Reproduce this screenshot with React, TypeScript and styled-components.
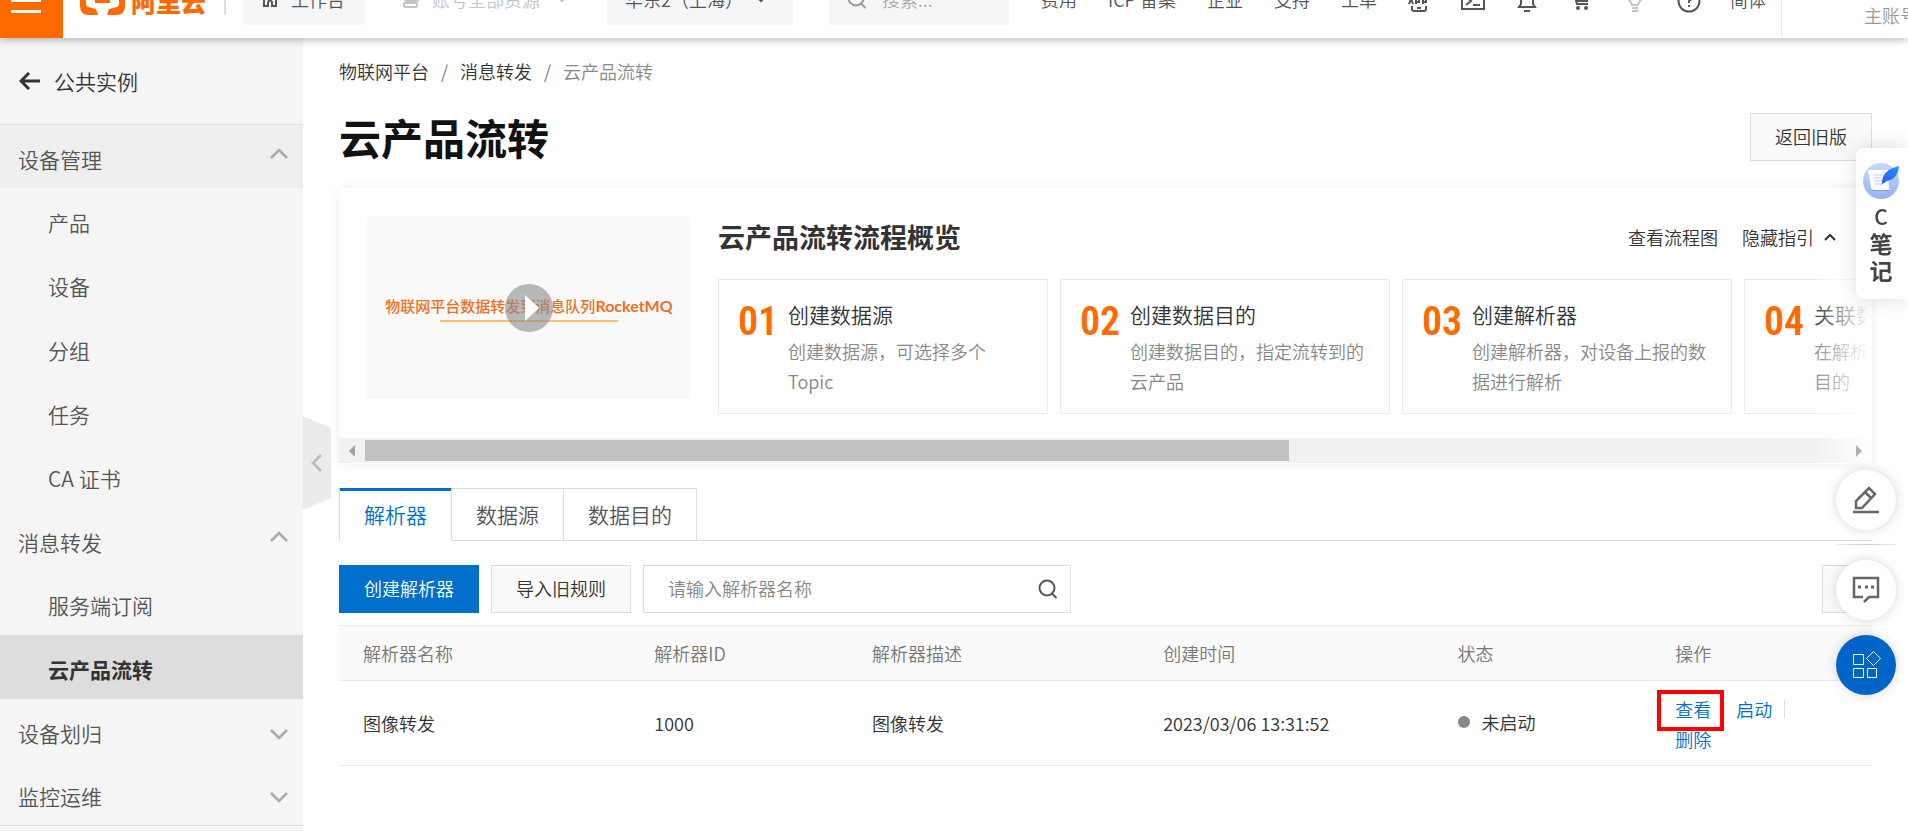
import React from 'react';
import styled, { createGlobalStyle, css } from 'styled-components';

const GlobalStyle = createGlobalStyle`
  *, *::before, *::after { box-sizing: border-box; }
  html, body { margin: 0; padding: 0; }
  body {
    background: #fff;
    color: #333;
    font-family: 'Noto Sans CJK SC', sans-serif;
    font-size: 18px;
    font-weight: 350;
    line-height: 30px;
    overflow-x: hidden;
  }
  button, input { font: inherit; color: inherit; margin: 0; }
  a { color: inherit; text-decoration: none; }
  ul, ol, h1, h2, h3, p { margin: 0; padding: 0; list-style: none; }
`;

/* ---------- top bar ---------- */

const Header = styled.header`
  position: relative;
  z-index: 5;
  height: 38px;
  display: flex;
  flex-direction: column;
  justify-content: flex-end;
  clip-path: inset(0 0 -20px 0);
  background: #fff;
  box-shadow: 0 2px 8px rgba(0, 0, 0, 0.28);
`;

const Bar = styled.div`
  flex: none;
  height: 75px;
  display: flex;
  align-items: center;
  color: #555;
  white-space: nowrap;
`;

const MenuButton = styled.button`
  width: 63px;
  height: 75px;
  padding: 0 22px 0 11px;
  border: 0;
  background: #ff6a00;
  display: flex;
  flex-direction: column;
  justify-content: center;
  gap: 8px;
  span { height: 3px; background: #fff; }
`;

const Logo = styled.a`
  display: flex;
  align-items: center;
  gap: 6px;
  margin-left: 17px;
  padding-right: 18px;
  border-right: 2px solid #ddd;
  height: 28px;
  color: #ff6a00;
  font-size: 25px;
  font-weight: 900;
`;

const Pill = styled.button<{ $plain?: boolean; $width: number; $left: number }>`
  width: ${p => p.$width}px;
  margin-left: ${p => p.$left}px;
  height: 49px;
  padding: 0 18px 4px;
  border: 0;
  border-radius: 4px;
  background: ${p => (p.$plain ? 'transparent' : '#f5f6f8')};
  color: ${p => (p.$plain ? '#c1c5cc' : '#555')};
  display: flex;
  align-items: center;
  gap: 12px;
  svg:last-child:not(:first-child) { margin-left: auto; }
`;

const TopSearch = styled.label`
  width: 180px;
  height: 49px;
  margin-left: 36px;
  padding: 0 16px 4px 18px;
  background: #f5f6f8;
  display: flex;
  align-items: center;
  gap: 15px;
  color: #999;
  svg { flex: none; }
  input {
    width: 100%;
    min-width: 0;
    border: 0;
    padding: 0;
    background: none;
    outline: none;
  }
  input::placeholder { color: #aaa; opacity: 1; }
`;

const TopLinks = styled.nav`
  display: flex;
  align-items: center;
  gap: 31px;
  margin-left: 32px;
  padding-bottom: 4px;
`;

const IconLinks = styled.div`
  display: flex;
  align-items: center;
  gap: 28px;
  margin-left: 29px;
  a { display: flex; width: 26px; justify-content: center; }
  a:last-child { width: auto; padding-bottom: 4px; }
`;

const Muted = styled.a`
  color: #c1c5cc;
`;

const Account = styled.div`
  align-self: stretch;
  flex: 1;
  min-width: 0;
  margin-left: 15px;
  padding: 37px 0 0 82px;
  border-left: 1px solid #e8e8e8;
  overflow: hidden;
  color: #999;
`;

/* ---------- side navigation ---------- */

const Body = styled.div`
  display: flex;
  min-height: calc(100vh - 38px);
`;

const Sidebar = styled.aside`
  position: relative;
  flex: none;
  width: 303px;
  background: #f5f5f5;
  color: #555;
  font-size: 21px;
`;

const Back = styled.a`
  display: flex;
  align-items: center;
  gap: 13px;
  height: 87px;
  padding-left: 19px;
  border-bottom: 1px solid #ddd;
  color: #333;
`;

const Group = styled.button<{ $hot?: boolean }>`
  width: 100%;
  height: 63px;
  padding: 4px 15px 0 18px;
  border: 0;
  background: ${p => (p.$hot ? '#efefef' : 'transparent')};
  display: flex;
  align-items: center;
  justify-content: space-between;
`;

const Arrow = styled.svg<{ $open?: boolean }>`
  margin: ${p => (p.$open ? '0 0 10px' : '4px 0 0')};
`;

const Item = styled.a<{ $active?: boolean }>`
  display: flex;
  align-items: center;
  height: 64px;
  padding: 4px 0 0 48px;
  ${p =>
    p.$active &&
    css`
      background: #ddd;
      color: #333;
      font-weight: 700;
    `}
`;

const NavEnd = styled.div`
  border-top: 1px solid #ddd;
`;

const Collapse = styled.button`
  position: absolute;
  z-index: 2;
  left: 303px;
  top: 378px;
  width: 28px;
  height: 94px;
  padding: 0;
  border: 0;
  background: #ebebeb;
  clip-path: polygon(0 0, 100% 12px, 100% 82px, 0 100%);
  display: grid;
  place-items: center;
`;

/* ---------- content ---------- */

const Main = styled.main`
  flex: 1;
  min-width: 0;
  padding: 18px 36px 0;
`;

const Crumbs = styled.nav`
  display: flex;
  span { width: 31px; text-align: center; color: #777; }
  a:last-child { color: #888; }
`;

const TitleRow = styled.div`
  display: flex;
  align-items: center;
  justify-content: space-between;
  height: 48px;
  margin-top: 27px;
`;

const Title = styled.h1`
  font-size: 42px;
  line-height: 48px;
  font-weight: 700;
  color: #111;
`;

const Button = styled.button<{ $primary?: boolean }>`
  height: 48px;
  padding: 0 24px 2px;
  border: 1px solid ${p => (p.$primary ? '#0070cc' : '#ddd')};
  background: ${p => (p.$primary ? '#0070cc' : '#fafafa')};
  color: ${p => (p.$primary ? '#fff' : '#333')};
`;

const Guide = styled.section`
  position: relative;
  margin-top: 27px;
  padding-top: 28px;
  height: 276px;
  background: #fff;
  box-shadow: 0 0 9px rgba(0, 0, 0, 0.07);
  overflow: hidden;
  display: flex;
  flex-direction: column;
  justify-content: space-between;
`;

const GuideBody = styled.div`
  display: flex;
  gap: 27px;
  padding-left: 28px;
`;

const Video = styled.div`
  position: relative;
  flex: none;
  width: 324px;
  height: 183px;
  border-radius: 3px;
  background: #f9f9f9;
  display: flex;
  flex-direction: column;
  align-items: center;
  justify-content: center;
  color: #ee7020;
  font-size: 15px;
  line-height: 24px;
  font-weight: 500;
  white-space: nowrap;
  p { padding-bottom: 2px; }
  b { font-family: Lato, sans-serif; font-size: 16px; font-weight: 700; }
  i { width: 178px; height: 2px; background: #f8c268; }
`;

const Play = styled.button`
  position: absolute;
  top: 68px;
  left: 138px;
  width: 48px;
  height: 48px;
  padding: 0 0 0 5px;
  border: 0;
  border-radius: 50%;
  background: rgba(140, 140, 140, 0.6);
  display: grid;
  place-items: center;
`;

const Steps = styled.div`
  flex: 1;
  min-width: 0;
`;

const StepsHead = styled.div`
  display: flex;
  align-items: center;
  gap: 24px;
  height: 42px;
  padding: 0 36px 0 0;
  h2 {
    flex: 1;
    font-size: 27px;
    line-height: 42px;
    font-weight: 700;
  }
  a { display: flex; align-items: center; gap: 10px; }
`;

const Cards = styled.ol`
  display: flex;
  gap: 12px;
  margin-top: 21px;
  overflow: hidden;
`;

const Card = styled.li`
  flex: none;
  width: 330px;
  height: 135px;
  padding: 18px 24px 0 19px;
  border: 1px solid #ebebeb;
  display: grid;
  grid-template-columns: 50px 1fr;
`;

const Num = styled.span`
  color: #ff6a00;
  font-family: 'Roboto Condensed', 'Liberation Sans Narrow', 'Liberation Sans', sans-serif;
  font-size: 40px;
  font-weight: 600;
  line-height: 48px;
`;

const CardText = styled.div`
  h3 { font-size: 21px; font-weight: 350; line-height: 33px; margin-bottom: 5px; }
  p { color: #888; }
`;

const Scrollbar = styled.div`
  display: flex;
  align-items: center;
  height: 25px;
  margin-bottom: 1px;
  padding: 0 10px;
  background: #f1f1f1;
  svg { position: relative; z-index: 1; }
`;

const Track = styled.div`
  flex: 1;
  margin: 0 10px;
`;

const Thumb = styled.div`
  width: 62.4%;
  height: 21px;
  background: #c1c1c1;
`;

const Fade = styled.div`
  position: absolute;
  inset: 90px 0 1px auto;
  width: 60px;
  background: linear-gradient(to right, rgba(255, 255, 255, 0), #fff 95%);
  pointer-events: none;
`;

const Tabs = styled.div`
  display: flex;
  margin-top: 24px;
  border-bottom: 1px solid #ddd;
`;

const Tab = styled.button<{ $active?: boolean }>`
  height: 53px;
  margin-bottom: -1px;
  padding: 0 24px 2px;
  border: solid #ddd;
  border-width: 1px 1px 1px 0;
  background: #fff;
  color: #555;
  font-size: 21px;
  ${p =>
    p.$active &&
    css`
      border-left-width: 1px;
      border-bottom-color: #fff;
      border-top-color: #0070cc;
      box-shadow: inset 0 2px #0070cc;
      color: #0070cc;
    `}
`;

const Toolbar = styled.div`
  display: flex;
  gap: 12px;
  margin: 24px 0 12px;
`;

const SearchBox = styled.label`
  width: 428px;
  height: 48px;
  padding: 0 12px 0 24px;
  border: 1px solid #ddd;
  display: flex;
  align-items: center;
  input {
    flex: 1;
    min-width: 0;
    padding: 0 0 2px;
    border: 0;
    outline: none;
    background: none;
  }
  input::placeholder { color: #888; opacity: 1; }
`;

const Refresh = styled.button`
  width: 50px;
  height: 48px;
  margin-left: auto;
  border: 1px solid #ddd;
  background: #fafafa;
`;

const Table = styled.table`
  width: 100%;
  border-collapse: collapse;
  table-layout: fixed;
  th, td { text-align: left; border-bottom: 1px solid #ebebeb; }
  thead tr { background: #fafafa; border-top: 1px solid #ebebeb; }
  th { padding: 12px 0 12px 24px; font-weight: 350; color: #777; }
  td { padding: 11px 0 11px 24px; }
`;

const Status = styled.span`
  display: flex;
  align-items: center;
  gap: 12px;
  padding-bottom: 3px;
  &::before {
    content: '';
    width: 12px;
    height: 12px;
    border-radius: 50%;
    background: #888;
  }
`;

const Actions = styled.div`
  display: flex;
  flex-wrap: wrap;
  width: 130px;
  padding-top: 2px;
  color: #0070cc;
  a { display: flex; align-items: center; }
  a:not(:last-child)::after {
    content: '';
    width: 1px;
    height: 18px;
    margin: 0 12px;
    background: #ddd;
  }
`;

const Marked = styled.span`
  position: relative;
  &::after {
    content: '';
    position: absolute;
    inset: -4px -13px -7px -18px;
    border: 4px solid #f00;
  }
`;

/* ---------- floating tools ---------- */

const Notes = styled.button`
  position: fixed;
  z-index: 6;
  right: 0;
  top: 148px;
  width: 52px;
  height: 151px;
  padding: 14px 2px 0 0;
  border: 0;
  border-radius: 8px 0 0 8px;
  background: #fff;
  box-shadow: 0 0 20px rgba(0, 0, 0, 0.14);
  color: #444;
  font-size: 23px;
  font-weight: 700;
  line-height: 27px;
  display: flex;
  flex-direction: column;
  align-items: center;
  b { font-weight: 500; font-size: 21px; margin-top: 3px; }
`;

const Tools = styled.div`
  position: fixed;
  z-index: 6;
  right: 12px;
  top: 470px;
  display: flex;
  flex-direction: column;
  gap: 15px;
  hr {
    width: 60px;
    height: 1px;
    margin: -1px 0 0;
    border: 0;
    background: linear-gradient(to right, #eee, #c5ccd6, #eee);
  }
`;

const Round = styled.button<{ $blue?: boolean }>`
  width: 60px;
  height: 60px;
  padding: 0;
  border: 0;
  border-radius: 50%;
  background: ${p => (p.$blue ? '#0064c8' : '#fff')};
  box-shadow: 0 0 12px rgba(0, 0, 0, 0.16);
  display: grid;
  place-items: center;
`;

/* ---------- icons ---------- */

const Svg = ({ w = 24, h = w, sw = 2, children }: { w?: number; h?: number; sw?: number; children: React.ReactNode }) => (
  <svg width={w} height={h} viewBox={`0 0 ${w} ${h}`} fill="none" stroke="currentColor" strokeWidth={sw} aria-hidden="true">
    {children}
  </svg>
);

const Caret = () => (
  <Svg w={12} h={8}><path d="M1 1l5 5 5-5" /></Svg>
);

const Magnifier = ({ color = '#555' }: { color?: string }) => (
  <svg width="20" height="20" viewBox="0 0 20 20" fill="none" stroke={color} strokeWidth="2" aria-hidden="true">
    <circle cx="9" cy="9" r="7.5" />
    <path d="M14 14.500l4.500 4.500" />
  </svg>
);

const Chevron = ({ open }: { open?: boolean }) => (
  <Arrow $open={open} width="18" height="11" viewBox="0 0 18 11" fill="none" stroke="#aaa" strokeWidth="2.5" aria-hidden="true">
    <path d={open ? 'M1 10l8-8 8 8' : 'M1 1l8 8 8-8'} />
  </Arrow>
);

const steps = [
  { no: '01', title: '创建数据源', text: '创建数据源，可选择多个 Topic' },
  { no: '02', title: '创建数据目的', text: '创建数据目的，指定流转到的云产品' },
  { no: '03', title: '创建解析器', text: '创建解析器，对设备上报的数据进行解析' },
  { no: '04', title: '关联数据', text: '在解析器中关联数据源和数据目的' },
];

const menu = [
  { name: '设备管理', open: true, hot: true, items: ['产品', '设备', '分组', '任务', 'CA 证书'] },
  { name: '消息转发', open: true, items: ['服务端订阅', '云产品流转'] },
  { name: '设备划归', items: [] },
  { name: '监控运维', items: [] },
];

export default function App() {
  return (
    <>
      <GlobalStyle />
      <Header>
        <Bar>
          <MenuButton aria-label="菜单"><span /><span /><span /></MenuButton>
          <Logo href="#">
            <svg width="45" height="29" viewBox="0 0 45 29" fill="currentColor" aria-hidden="true">
              <path d="M18 0H9Q0 0 0 9v11q0 9 9 9h9l-2-6-8-2q-2-1-2-3v-7q0-2 2-3l8-2z" />
              <path d="M27 0h9q9 0 9 9v11q0 9-9 9h-9l2-6 8-2q2-1 2-3v-7q0-2-2-3l-8-2z" />
              <path d="M15 14h15v3H15z" />
            </svg>
            阿里云
          </Logo>
          <Pill $width={122} $left={17}>
            <Svg w={18} h={20} sw={2}><path d="M1 9l8-7 8 7M3 8v9h4v-4q2-3 4 0v4h4V8" /></Svg>工作台
          </Pill>
          <Pill $plain $width={202} $left={19}>
            <Svg w={18} h={20}><rect x="2" y="2" width="13" height="4" rx="1" /><rect x="3" y="8" width="13" height="4" rx="1" /><rect x="2" y="14" width="13" height="4" rx="1" /></Svg>
            账号全部资源<Caret />
          </Pill>
          <Pill $width={186} $left={21}>华东2（上海）<Caret /></Pill>
          <TopSearch>
            <Magnifier color="#999" />
            <input placeholder="搜索..." aria-label="搜索" />
          </TopSearch>
          <TopLinks>
            <a href="#">费用</a><a href="#">ICP 备案</a><a href="#">企业</a><a href="#">支持</a><a href="#">工单</a>
          </TopLinks>
          <IconLinks>
            <a href="#" aria-label="App"><Svg w={22}><path d="M4 7V3q0-2 2-2h10q2 0 2 2v4M4 16v3q0 2 2 2h10q2 0 2-2v-3M9 18h4" /><path d="M1 14l2-5 2 5M8 14V9h3v3H8M15 14V9h3v3h-3" /></Svg></a>
            <a href="#" aria-label="终端"><Svg w={24} h={18}><path d="M1 1h22v16H1zM5 5l5 4-5 4M12 13h7" /></Svg></a>
            <a href="#" aria-label="通知"><Svg w={20} h={24}><path d="M2 18h16l-2-3V9q0-6-6-6T4 9v6zM7 22h6" /></Svg></a>
            <a href="#" aria-label="购物车"><Svg w={20}><path d="M0 2h3l3 11h11M5 5h13M6 8h12M6 10h11" /><circle cx="7" cy="17" r="1" /><circle cx="15" cy="17" r="1" /></Svg></a>
            <Muted href="#" aria-label="提示"><Svg w={18} h={22}><path d="M6 15q0-2-3-5-3-8 6-9 9 1 6 9-3 3-3 5zM6 18h6M6 21h6" /></Svg></Muted>
            <a href="#" aria-label="帮助"><Svg w={24}><circle cx="12" cy="12" r="10.5" /><path d="M9 9q0-3 3-3t3 3q0 1-3 3v2M12 16v2" /></Svg></a>
            <a href="#">简体</a>
          </IconLinks>
          <Account>主账号</Account>
        </Bar>
      </Header>

      <Body>
        <Sidebar>
          <Back href="#">
            <svg width="22" height="18" viewBox="0 0 22 18" fill="none" stroke="#333" strokeWidth="3" aria-hidden="true"><path d="M2 9h19M10 1L2 9l8 8" /></svg>
            公共实例
          </Back>
          <nav>
            {menu.map(g => (
              <React.Fragment key={g.name}>
                <Group $hot={g.hot}>{g.name}<Chevron open={g.open} /></Group>
                {g.items.map(i => (
                  <Item key={i} href="#" $active={i === '云产品流转'}>{i}</Item>
                ))}
              </React.Fragment>
            ))}
            <NavEnd />
          </nav>
          <Collapse aria-label="收起">
            <svg width="14" height="18" viewBox="0 0 14 18" fill="none" stroke="#bbb" strokeWidth="2.5" aria-hidden="true"><path d="M11 1L3 9l8 8" /></svg>
          </Collapse>
        </Sidebar>

        <Main>
          <Crumbs>
            <a href="#">物联网平台</a><span>/</span><a href="#">消息转发</a><span>/</span><a href="#">云产品流转</a>
          </Crumbs>
          <TitleRow>
            <Title>云产品流转</Title>
            <Button>返回旧版</Button>
          </TitleRow>

          <Guide>
            <GuideBody>
              <Video>
                <p>物联网平台数据转发到消息队列<b>RocketMQ</b></p>
                <i />
                <Play aria-label="播放">
                  <svg width="14" height="26" viewBox="0 0 14 26" fill="#fff" aria-hidden="true"><path d="M0 0l14 13L0 26z" /></svg>
                </Play>
              </Video>
              <Steps>
                <StepsHead>
                  <h2>云产品流转流程概览</h2>
                  <a href="#">查看流程图</a>
                  <a href="#">隐藏指引<Svg w={12} h={8}><path d="M1 7l5-5 5 5" /></Svg></a>
                </StepsHead>
                <Cards>
                  {steps.map(s => (
                    <Card key={s.no}>
                      <Num>{s.no}</Num>
                      <CardText><h3>{s.title}</h3><p>{s.text}</p></CardText>
                    </Card>
                  ))}
                </Cards>
              </Steps>
            </GuideBody>
            <Scrollbar>
              <svg width="6" height="12" viewBox="0 0 6 12" fill="#a0a0a0" aria-hidden="true"><path d="M6 0v12L0 6z" /></svg>
              <Track><Thumb /></Track>
              <svg width="6" height="12" viewBox="0 0 6 12" fill="#b0b0b0" aria-hidden="true"><path d="M0 0v12l6-6z" /></svg>
            </Scrollbar>
            <Fade />
          </Guide>

          <Tabs role="tablist">
            <Tab role="tab" aria-selected $active>解析器</Tab>
            <Tab role="tab">数据源</Tab>
            <Tab role="tab">数据目的</Tab>
          </Tabs>

          <Toolbar>
            <Button $primary>创建解析器</Button>
            <Button>导入旧规则</Button>
            <SearchBox>
              <input placeholder="请输入解析器名称" aria-label="解析器名称" />
              <Magnifier />
            </SearchBox>
            <Refresh aria-label="刷新" />
          </Toolbar>

          <Table>
            <colgroup>
              <col width="19%" /><col width="14.2%" /><col width="19%" /><col width="19.2%" /><col width="14.2%" /><col />
            </colgroup>
            <thead>
              <tr><th>解析器名称</th><th>解析器ID</th><th>解析器描述</th><th>创建时间</th><th>状态</th><th>操作</th></tr>
            </thead>
            <tbody>
              <tr>
                <td>图像转发</td>
                <td>1000</td>
                <td>图像转发</td>
                <td>2023/03/06 13:31:52</td>
                <td><Status>未启动</Status></td>
                <td>
                  <Actions>
                    <a href="#"><Marked>查看</Marked></a><a href="#">启动</a><a href="#">删除</a>
                  </Actions>
                </td>
              </tr>
            </tbody>
          </Table>
        </Main>
      </Body>

      <Notes>
        <svg width="38" height="38" viewBox="0 0 38 38" aria-hidden="true">
          <defs>
            <linearGradient id="disc" x1="0" y1="0" x2="0" y2="1"><stop offset="0" stopColor="#c9d8fb" /><stop offset="1" stopColor="#93b2f6" /></linearGradient>
            <linearGradient id="quill" x1="1" y1="0" x2="0" y2="1"><stop offset="0" stopColor="#1a9bff" /><stop offset="1" stopColor="#3d4ff0" /></linearGradient>
          </defs>
          <circle cx="19" cy="19" r="18" fill="url(#disc)" />
          <path d="M7 10l3 19h18l-2-6 1-13z" fill="#7c9df0" />
          <path d="M6 9q0-1 1-1h19l1 19q2 0 1 1H12q-3 0-3-3z" fill="#fff" />
          <path d="M12 13h9M12 16h8M12 19h8M13 22h6" stroke="#b9cbf8" />
          <path d="M20 21q0-13 17-17-1 13-12 15l-6 4z" fill="url(#quill)" />
        </svg>
        <b>C</b>
        <span>笔</span>
        <span>记</span>
      </Notes>

      <Tools>
        <Round aria-label="编辑">
          <svg width="28" height="28" viewBox="0 0 28 28" fill="none" stroke="#666" strokeWidth="2.5" aria-hidden="true">
            <path d="M4 22v-7L17 2l6 6-13 14zM13 6l6 6M1 26h26" />
          </svg>
        </Round>
        <hr />
        <Round aria-label="反馈">
          <svg width="28" height="28" viewBox="0 0 28 28" fill="none" stroke="#666" strokeWidth="2.5" aria-hidden="true">
            <path d="M11 21H2V2h24v19h-9l-5 5" />
            <path d="M6 11h3M13 11h3M19 11h3" strokeWidth="3" />
          </svg>
        </Round>
        <Round $blue aria-label="应用">
          <svg width="30" height="30" viewBox="0 0 30 30" fill="none" stroke="#fff" strokeWidth="1" aria-hidden="true">
            <path d="M2.500 4.500h10v10h-10zM2.500 18.500h10v9h-10zM16.500 18.500h9v9h-9zM22.500 1.500l7 7-7 7-7-7z" />
          </svg>
        </Round>
      </Tools>
    </>
  );
}
